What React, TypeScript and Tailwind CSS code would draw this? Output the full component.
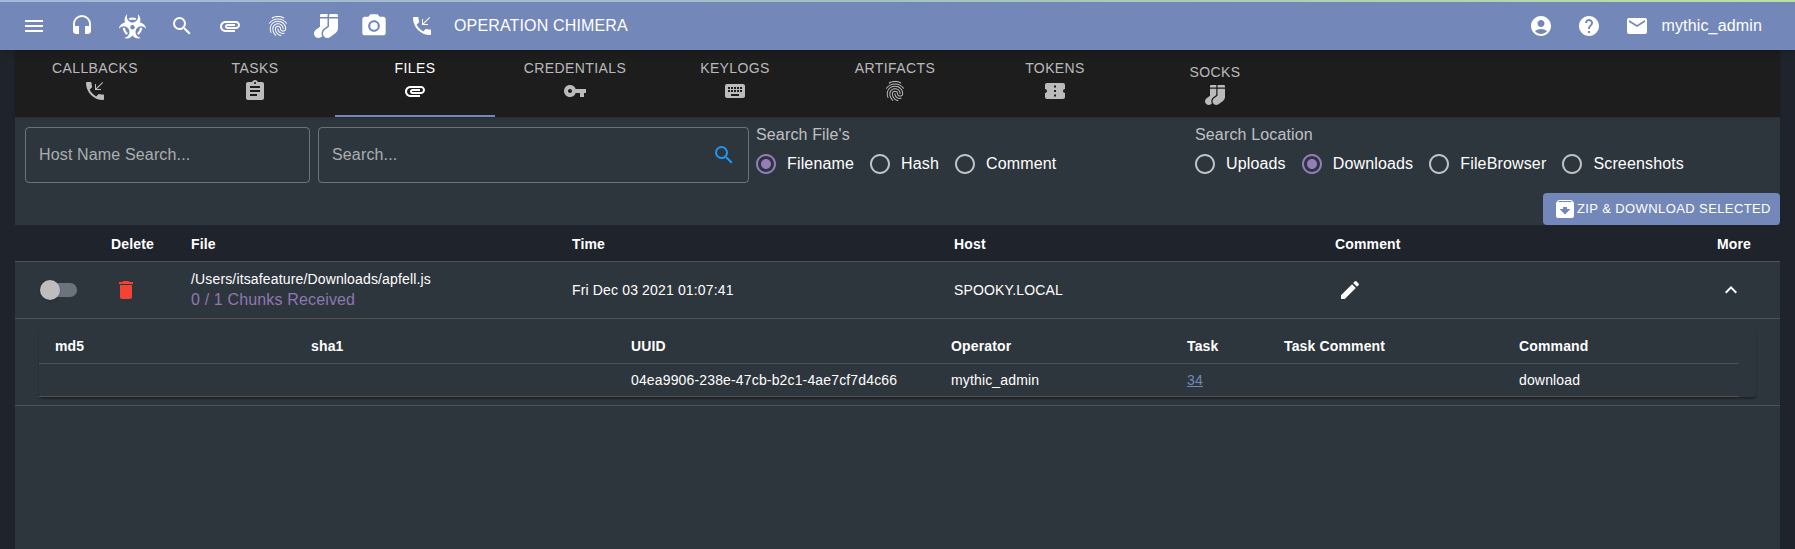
import type { ReactNode } from 'react';
import {
  MdMenu,
  MdHeadset,
  MdSearch,
  MdFingerprint,
  MdCameraAlt,
  MdPhoneCallback,
  MdAssignment,
  MdVpnKey,
  MdKeyboard,
  MdConfirmationNumber,
  MdAccountCircle,
  MdHelp,
  MdEmail,
  MdDelete,
  MdEdit,
  MdKeyboardArrowUp,
  MdRadioButtonChecked,
  MdRadioButtonUnchecked,
  MdArchive,
} from 'react-icons/md';
import { FaBiohazard, FaSocks } from 'react-icons/fa';

const AttachmentIcon = ({ size = 24 }: { size?: number }) => (
  <svg width={size} height={size} viewBox="0 0 24 24" fill="currentColor">
    <path d="M2 12.5C2 9.46 4.46 7 7.5 7H18c2.21 0 4 1.79 4 4s-1.79 4-4 4H9.5C8.12 15 7 13.88 7 12.5S8.12 10 9.5 10H17v2H9.41c-.55 0-.55 1 0 1H18c1.1 0 2-.9 2-2s-.9-2-2-2H7.5C5.57 9 4 10.57 4 12.5S5.57 16 7.5 16H17v2H7.5C4.46 18 2 15.54 2 12.5z" />
  </svg>
);

const NavButton = ({ children, wide }: { children: ReactNode; wide?: boolean }) => (
  <div className={`flex h-12 items-center justify-center text-white ${wide ? 'w-[52px]' : 'w-12'}`}>{children}</div>
);

type TabProps = {
  label: string;
  icon: ReactNode;
  active?: boolean;
  low?: boolean;
};

const Tab = ({ label, icon, active, low }: TabProps) => (
  <div
    className={`flex h-full w-[160px] flex-col items-center border-b-2 ${low ? 'pt-[14px]' : 'pt-[10px]'} ${
      active ? 'border-[#7388b8] text-white' : 'border-transparent text-white/70'
    }`}
  >
    <span className="text-[14px] leading-[17px] tracking-[0.4px]">{label}</span>
    <span className="mt-[2px] flex h-6 items-center">{icon}</span>
  </div>
);

const RadioItem = ({ label, checked }: { label: string; checked?: boolean }) => (
  <div className="flex items-center gap-[9px]">
    {checked ? (
      <MdRadioButtonChecked size={24} className="text-[#937dbb]" />
    ) : (
      <MdRadioButtonUnchecked size={24} className="text-white/70" />
    )}
    <span className="text-[16px] leading-6 tracking-[0.15px] text-white">{label}</span>
  </div>
);

const RadioGroup = ({ title, width, items }: { title: string; width: string; items: ReactNode }) => (
  <div className={`-mt-[2px] ${width}`}>
    <div className="pl-[2px] text-[16px] leading-5 tracking-[0.15px] text-white/70">{title}</div>
    <div className="mt-[7px] flex gap-[14px]">{items}</div>
  </div>
);

const mainCols = 'grid-cols-[80px_80px_381px_382px_381px_382px_79px]';
const subCols = 'grid-cols-[256px_320px_320px_236px_97px_235px_236px]';

const App = () => {
  return (
    <div className="flex h-[549px] flex-col overflow-hidden bg-[#1f232b] font-['Liberation_Sans',Arial,sans-serif] text-white">
      <header className="relative z-10 h-[50px] bg-[#7388b8] shadow-md">
        <div className="h-[2px] bg-linear-to-r from-[#a3b7d8] via-[#a0c4c0] to-[#b8e2a2]" />
        <div className="flex h-[48px] items-center pl-[10px] pr-[33px]">
          <NavButton><MdMenu size={24} /></NavButton>
          <NavButton><MdHeadset size={24} /></NavButton>
          <NavButton wide><FaBiohazard size={27} /></NavButton>
          <NavButton><MdSearch size={24} /></NavButton>
          <NavButton><AttachmentIcon /></NavButton>
          <NavButton><MdFingerprint size={24} /></NavButton>
          <NavButton><FaSocks size={24} /></NavButton>
          <NavButton><MdCameraAlt size={28} /></NavButton>
          <NavButton><MdPhoneCallback size={24} /></NavButton>
          <span className="ml-2 text-[16px] tracking-[0.15px]">OPERATION CHIMERA</span>
          <div className="ml-auto flex items-center">
            <NavButton><MdAccountCircle size={24} /></NavButton>
            <NavButton><MdHelp size={24} /></NavButton>
            <NavButton><MdEmail size={24} /></NavButton>
            <span className="text-[16px] tracking-[0.15px]">mythic_admin</span>
          </div>
        </div>
      </header>

      <main className="mx-[15px] flex flex-1 flex-col bg-[#2e363d]">
        <nav className="flex h-[67px] bg-[#1d1d1d] shadow-sm">
          <Tab label="CALLBACKS" icon={<MdPhoneCallback size={24} />} />
          <Tab label="TASKS" icon={<MdAssignment size={24} />} />
          <Tab label="FILES" icon={<AttachmentIcon />} active />
          <Tab label="CREDENTIALS" icon={<MdVpnKey size={24} />} />
          <Tab label="KEYLOGS" icon={<MdKeyboard size={24} />} />
          <Tab label="ARTIFACTS" icon={<MdFingerprint size={24} />} />
          <Tab label="TOKENS" icon={<MdConfirmationNumber size={24} />} />
          <Tab label="SOCKS" icon={<FaSocks size={20} />} low />
        </nav>

        <section className="flex pl-[10px] pt-[10px]">
          <input
            readOnly
            placeholder="Host Name Search..."
            className="h-[56px] w-[285px] rounded border border-white/30 bg-transparent px-[13px] text-[16px] tracking-[0.15px] placeholder:text-white/60"
          />
          <div className="ml-2 flex h-[56px] w-[431px] items-center rounded border border-white/30 pl-[13px] pr-[12px]">
            <input
              readOnly
              placeholder="Search..."
              className="min-w-0 flex-1 bg-transparent text-[16px] tracking-[0.15px] placeholder:text-white/60"
            />
            <MdSearch size={24} className="text-[#2196f3]" />
          </div>
          <div className="ml-[5px] flex">
            <RadioGroup
              title="Search File's"
              width="w-[439px]"
              items={
                <>
                  <RadioItem label="Filename" checked />
                  <RadioItem label="Hash" />
                  <RadioItem label="Comment" />
                </>
              }
            />
            <RadioGroup
              title="Search Location"
              width="w-[520px]"
              items={
                <>
                  <RadioItem label="Uploads" />
                  <RadioItem label="Downloads" checked />
                  <RadioItem label="FileBrowser" />
                  <RadioItem label="Screenshots" />
                </>
              }
            />
          </div>
        </section>

        <div className="mt-[10px] flex justify-end">
          <div className="flex h-[32px] w-[237px] items-center rounded bg-[#7388b8] pl-[10px] text-[13px] tracking-[0.4px] text-white">
            <MdArchive size={24} />
            ZIP &amp; DOWNLOAD SELECTED
          </div>
        </div>

        <div className={`grid h-[36px] items-center bg-[#1f232b] pt-[2px] text-[14px] font-bold tracking-[0.15px] ${mainCols}`}>
          <span />
          <span className="pl-4">Delete</span>
          <span className="pl-4">File</span>
          <span className="pl-4">Time</span>
          <span className="pl-4">Host</span>
          <span className="pl-4">Comment</span>
          <span className="pl-4">More</span>
        </div>

        <div className={`grid h-[58px] items-center border-y border-[#515151] text-[14px] tracking-[0.15px] ${mainCols}`}>
          <div className="relative ml-[26px] h-[14px] w-[36px] rounded-full bg-[#6c737c]">
            <div className="absolute -left-[1px] -top-[3px] h-5 w-5 rounded-full bg-[#bdbdbd] shadow" />
          </div>
          <div className="pl-[19px]"><MdDelete size={24} className="text-[#f44336]" /></div>
          <div className="pl-4">
            <div className="leading-[17px]">/Users/itsafeature/Downloads/apfell.js</div>
            <div className="mt-[2px] text-[16px] leading-5 text-[#8e77b4]">0 / 1 Chunks Received</div>
          </div>
          <div className="pl-4">Fri Dec 03 2021 01:07:41</div>
          <div className="pl-4">SPOOKY.LOCAL</div>
          <div className="pl-[19px]"><MdEdit size={24} /></div>
          <div className="pl-[18px]"><MdKeyboardArrowUp size={24} /></div>
        </div>

        <div className="h-[87px] border-b border-[#515151] pl-[24px]">
          <div className="mt-[11px] w-[1717px] rounded-b bg-[#2e363d] shadow-[0_2px_2px_rgba(0,0,0,0.35)]">
            <div className="w-[1700px] border-b border-[#515151]">
              <div className={`grid h-[34px] items-center border-b border-[#515151] text-[14px] font-bold tracking-[0.15px] ${subCols}`}>
                <span className="pl-4">md5</span>
                <span className="pl-4">sha1</span>
                <span className="pl-4">UUID</span>
                <span className="pl-4">Operator</span>
                <span className="pl-4">Task</span>
                <span className="pl-4">Task Comment</span>
                <span className="pl-4">Command</span>
              </div>
              <div className={`grid h-[32px] items-center text-[14px] tracking-[0.15px] ${subCols}`}>
                <span />
                <span />
                <span className="pl-4">04ea9906-238e-47cb-b2c1-4ae7cf7d4c66</span>
                <span className="pl-4">mythic_admin</span>
                <span className="pl-4 text-[#7388b8] underline">34</span>
                <span />
                <span className="pl-4">download</span>
              </div>
            </div>
          </div>
        </div>
      </main>
    </div>
  );
};

export default App;
